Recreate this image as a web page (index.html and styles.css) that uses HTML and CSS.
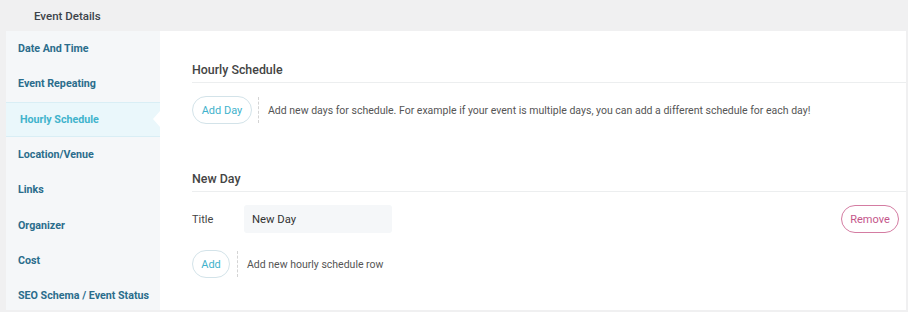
FILE: index.html
```html
<!DOCTYPE html>
<html>
<head>
<meta charset="utf-8">
<link rel="stylesheet" href="styles.css">
</head>
<body>
<div class="header">Event Details</div>
<div class="main">
  <nav class="sidebar">
    <div class="nav-item">Date And Time</div>
    <div class="nav-item">Event Repeating</div>
    <div class="nav-item active">Hourly Schedule<span class="notch"></span></div>
    <div class="nav-item">Location/Venue</div>
    <div class="nav-item">Links</div>
    <div class="nav-item">Organizer</div>
    <div class="nav-item">Cost</div>
    <div class="nav-item">SEO Schema / Event Status</div>
  </nav>
  <section class="content">
    <h3 class="section-title">Hourly Schedule</h3>
    <div class="action-row">
      <button class="pill pill-day">Add Day</button>
      <span class="sep"></span>
      <span class="hint">Add new days for schedule. For example if your event is multiple days, you can add a different schedule for each day!</span>
    </div>

    <h3 class="section-title second">New Day</h3>
    <div class="field-row">
      <label class="field-label">Title</label>
      <div class="input">New Day</div>
      <button class="pill pill-remove">Remove</button>
    </div>
    <div class="action-row add-row">
      <button class="pill pill-add">Add</button>
      <span class="sep sep-add"></span>
      <span class="hint">Add new hourly schedule row</span>
    </div>
  </section>
</div>
</body>
</html>
```
FILE: styles.css
```css
* { box-sizing: border-box; }
html, body { margin: 0; padding: 0; }
body {
  background: #f0f0f1;
  font-family: Roboto, "Liberation Sans", Arial, sans-serif;
  width: 908px;
  height: 312px;
  overflow: hidden;
}
.header {
  height: 31px;
  display: flex;
  align-items: center;
  padding-left: 34px;
  font-size: 11.5px;
  font-weight: 500;
  color: #3c434a;
}
.main {
  display: flex;
  padding-left: 6px;
  padding-right: 2px;
  height: 279px;
}
.sidebar {
  width: 154px;
  background: #f5f7f9;
  flex: none;
}
.nav-item {
  position: relative;
  height: 35.3px;
  display: flex;
  align-items: center;
  padding-left: 12px;
  font-size: 10.7px;
  font-weight: 700;
  white-space: nowrap;
  color: #2b6d8c;
}
.nav-item.active {
  background: #eaf7fb;
  border-top: 1px solid #d9eef5;
  border-bottom: 1px solid #d9eef5;
  color: #41b3cc;
  padding-left: 14px;
}
.notch {
  position: absolute;
  right: 0;
  top: 50%;
  margin-top: -8px;
  width: 0;
  height: 0;
  border-top: 8px solid transparent;
  border-bottom: 8px solid transparent;
  border-right: 7px solid #ffffff;
}
.content {
  flex: 1;
  background: #fff;
  padding: 31px 0 0 32px;
}
.section-title {
  margin: 0;
  font-size: 12.4px;
  line-height: 16px;
  font-weight: 500;
  color: #444;
  padding-bottom: 4px;
  border-bottom: 1px solid #eceeef;
}
.section-title.second { margin-top: 47px; }
.action-row {
  display: flex;
  align-items: center;
  margin-top: 13px;
  height: 28px;
}
.add-row { margin-top: 17px; }
.pill {
  height: 28px;
  border: 1px solid #d3e3e9;
  border-radius: 14px;
  background: #fff;
  font-family: inherit;
  font-size: 11px;
  color: #3fb2cc;
  padding: 0;
  flex: none;
}
.pill-day { width: 60px; }
.pill-add { width: 38px; }
.sep {
  width: 0;
  height: 26px;
  border-left: 1px dashed #d4d4d4;
  margin: 0 9px 0 6px;
}
.sep-add { margin: 0 9px 0 7px; }
.hint {
  font-size: 10.5px;
  color: #555;
}
.field-row {
  display: flex;
  align-items: center;
  margin-top: 13px;
  height: 28px;
}
.field-label {
  width: 52px;
  font-size: 11px;
  color: #444;
}
.input {
  width: 148px;
  height: 28px;
  background: #f5f7f9;
  border-radius: 3px;
  padding-left: 8px;
  display: flex;
  align-items: center;
  font-size: 11.3px;
  color: #333;
}
.pill-remove {
  margin-left: auto;
  margin-right: 7px;
  width: 58px;
  border-color: #d47ca2;
  color: #c4568a;
}
```
